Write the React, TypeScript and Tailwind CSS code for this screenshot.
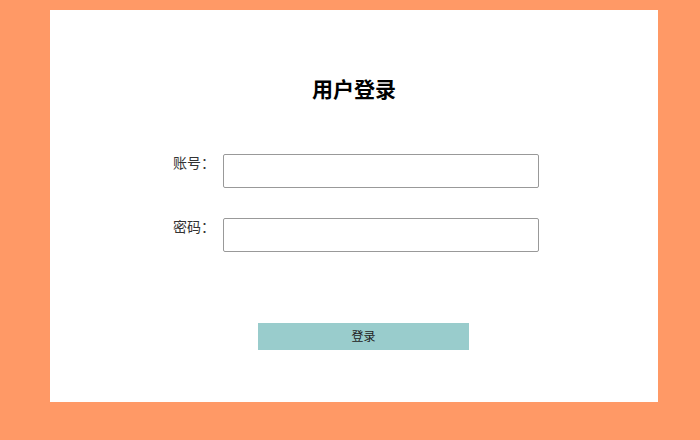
export default function App() {
  return (
    <div
      className="h-[440px] w-[700px] bg-[#ff9966] pt-[10px] pl-[50px] pr-[42px] pb-[38px]"
      style={{ fontFamily: '"Liberation Sans", "Noto Sans CJK SC", sans-serif' }}
    >
      <div className="flex h-full flex-col bg-white pt-[66px]">
        {/* Title */}
        <h2 className="text-center text-[21px] font-bold leading-[28px] text-black">用户登录</h2>

        {/* Form */}
        <div className="mt-[50px] ml-[123px] flex flex-col gap-[30px]">
          <div className="flex items-start">
            <label className="mt-[1px] w-[42px] text-[14px] leading-[16px] text-[#333]">账号：</label>
            <input
              type="text"
              className="ml-[8px] h-[34px] w-[316px] rounded-[2px] border border-[#999] bg-white px-2 outline-none"
            />
          </div>
          <div className="flex items-start">
            <label className="mt-[1px] w-[42px] text-[14px] leading-[16px] text-[#333]">密码：</label>
            <input
              type="password"
              className="ml-[8px] h-[34px] w-[316px] rounded-[2px] border border-[#999] bg-white px-2 outline-none"
            />
          </div>
        </div>

        {/* Submit */}
        <button className="mt-[71px] ml-[208px] h-[27px] w-[211px] bg-[#99cccc] text-[12px] text-[#222]">
          登录
        </button>
      </div>
    </div>
  );
}
